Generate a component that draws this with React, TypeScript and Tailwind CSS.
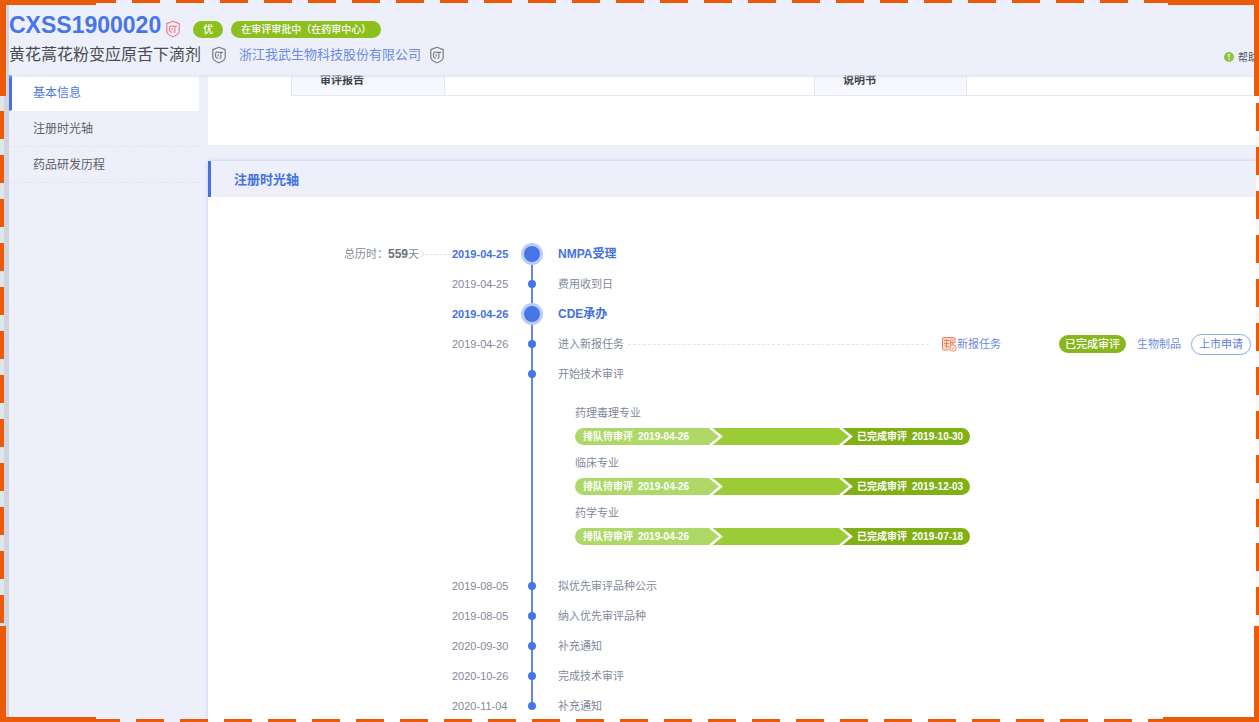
import clsx from "clsx";

const menu = ["基本信息", "注册时光轴", "药品研发历程"];

const reviews = [
  { name: "药理毒理专业", start: "2019-04-26", end: "2019-10-30" },
  { name: "临床专业", start: "2019-04-26", end: "2019-12-03" },
  { name: "药学专业", start: "2019-04-26", end: "2019-07-18" },
];

type Step = {
  date?: string;
  title: string;
  major?: boolean;
  total?: string;
  task?: boolean;
  reviews?: boolean;
};

const steps: Step[] = [
  { date: "2019-04-25", title: "NMPA受理", major: true, total: "559" },
  { date: "2019-04-25", title: "费用收到日" },
  { date: "2019-04-26", title: "CDE承办", major: true },
  { date: "2019-04-26", title: "进入新报任务", task: true },
  { title: "开始技术审评", reviews: true },
  { date: "2019-08-05", title: "拟优先审评品种公示" },
  { date: "2019-08-05", title: "纳入优先审评品种" },
  { date: "2020-09-30", title: "补充通知" },
  { date: "2020-10-26", title: "完成技术审评" },
  { date: "2020-11-04", title: "补充通知" },
];

function ShieldIcon({ className }: { className?: string }) {
  return (
    <svg
      viewBox="0 0 16 18"
      fill="none"
      stroke="currentColor"
      className={clsx("h-[18px] w-4 shrink-0", className)}
    >
      <path
        d="M8 1.2 14.2 3.6V11.4C14.2 13.8 11.4 15.4 8 16.8 4.6 15.4 1.8 13.8 1.8 11.4V3.6Z"
        strokeWidth="1.2"
        strokeLinejoin="round"
      />
      <path d="M6.4 5.6C4.8 6 4.4 7.2 4.4 8.8 4.4 10.8 5.2 12.2 7 12.3" strokeWidth="1.1" />
      <path d="M6.6 6.4H12M9.9 6.4V11.2Q9.9 12.3 8.4 12.2M7.2 8.2V10.4" strokeWidth="1.1" />
    </svg>
  );
}

function NewTaskIcon() {
  return (
    <svg
      viewBox="0 0 16 16"
      fill="none"
      stroke="currentColor"
      className="size-4 shrink-0 text-[#f4805c]"
    >
      <path d="M14 7V3Q14 1.5 12.5 1.5H3Q1.5 1.5 1.5 3V12.5Q1.5 14 3 14H8" fill="#fbd9cd" />
      <path d="M3 4.5H8M3 7.5H8M5.5 3V12M3.5 9.5 7.5 11M9.5 4H12.5M9.5 4V9M9.5 6.5H13M11.5 6.5V8" />
      <circle cx="12" cy="12" r="3.2" fill="#fff" />
      <path d="M10.5 12 11.8 13.2 13.6 10.8" />
    </svg>
  );
}

function Chevron({ left, right }: { left: string; right: string }) {
  return (
    <svg viewBox="0 0 14 17" className={clsx("h-[17px] w-[14px] shrink-0", right)}>
      <path d="M0 0H1L12 8.5 1 17H0Z" className={left} />
      <path d="M1 -0.5 12 8.5 1 17.5" fill="none" stroke="#fff" strokeWidth="2.4" />
    </svg>
  );
}

function ReviewBar({ start, end }: { start: string; end: string }) {
  return (
    <div className="flex h-[17px] w-[395px] items-center overflow-hidden rounded-full text-[10px] leading-[17px] font-bold text-white">
      <div className="flex w-[134px] gap-[5px] bg-[#aed868] pl-2">
        <span>排队待审评</span>
        <span>{start}</span>
      </div>
      <Chevron left="fill-[#aed868]" right="bg-[#9bcb35]" />
      <div className="h-full flex-1 bg-[#9bcb35]" />
      <Chevron left="fill-[#9bcb35]" right="bg-[#80b014]" />
      <div className="flex w-[117px] gap-[5px] bg-[#80b014] pl-1">
        <span>已完成审评</span>
        <span>{end}</span>
      </div>
    </div>
  );
}

function TimelineRow({ step, first, last }: { step: Step; first: boolean; last: boolean }) {
  return (
    <li className="grid grid-cols-[108px_56px_48px_1fr] text-[11px] leading-[30px] whitespace-nowrap text-[#82899a]">
      <div className="flex h-[30px] items-center">
        {step.total && (
          <>
            <span>总历时：</span>
            <strong className="text-xs text-[#6b7182]">{step.total}</strong>
            <span>天</span>
            <svg viewBox="0 0 6 10" className="h-[10px] w-[6px]" fill="none" stroke="#d9dde8">
              <path d="M1 1 5 5 1 9" />
            </svg>
            <span className="flex-1 border-t border-dashed border-[#dfe2ea]" />
          </>
        )}
      </div>
      <time className={clsx(step.major && "font-bold text-[#4472e0]")}>{step.date}</time>
      <div className="grid grid-rows-[30px_1fr] justify-items-center">
        <span
          className={clsx(
            "col-start-1 row-span-2 row-start-1 w-[2px] bg-[#6287ea]",
            first && "mt-[15px]",
            last && "mb-[15px]"
          )}
        />
        <span
          className={clsx(
            "col-start-1 row-start-1 self-center rounded-full bg-[#4676e6]",
            step.major ? "size-4 ring-[3px] ring-[#bccdf6]" : "size-2"
          )}
        />
      </div>
      <div className="pl-[2px]">
        <div className="flex h-[30px] items-center">
          <span className={clsx(step.major && "text-xs font-bold text-[#4472e0]")}>
            {step.title}
          </span>
          {step.task && (
            <>
              <span className="mr-3 ml-1 flex-1 border-t border-dashed border-[#e3e6ee]" />
              <NewTaskIcon />
              <a href="#task" className="mr-[58px] text-[#6d8be0]">
                新报任务
              </a>
              <span className="rounded-full bg-[#86b81b] px-[6px] leading-[18px] font-medium text-white">
                已完成审评
              </span>
              <a href="#biologics" className="ml-[11px] text-[#6d8be0]">
                生物制品
              </a>
              <button className="mr-2 ml-[10px] rounded-full border border-[#8ca7ee] px-[7px] leading-[19px] text-[#5f80dd]">
                上市申请
              </button>
            </>
          )}
        </div>
        {step.reviews && (
          <div className="flex flex-col gap-2 pt-[14px] pb-[26px] pl-[17px]">
            {reviews.map((r) => (
              <div key={r.name}>
                <p className="mb-[5px] leading-5">{r.name}</p>
                <ReviewBar start={r.start} end={r.end} />
              </div>
            ))}
          </div>
        )}
      </div>
    </li>
  );
}

// Orange dashed frame with solid corners, drawn over the page
function Frame() {
  return (
    <div className="pointer-events-none absolute inset-0 z-20" aria-hidden="true">
      <div className="absolute inset-x-0 top-0 h-[3px] bg-[repeating-linear-gradient(to_right,#ea5a08_0_28px,transparent_28px_44px)]" />
      <div className="absolute right-0 bottom-0 left-1 h-[3px] bg-[repeating-linear-gradient(to_right,#ea5a08_0_28px,transparent_28px_44px)]" />
      <div className="absolute top-[23px] bottom-0 left-0 w-1 bg-[repeating-linear-gradient(to_bottom,#ea5a08_0_28px,#dfe5e8_28px_44px)]" />
      <div className="absolute top-[15px] right-0 bottom-0 w-[3px] bg-[repeating-linear-gradient(to_bottom,#ea5a08_0_28px,#fff8f2_28px_44px)]" />
      <div className="absolute top-0 left-0 size-24 border-t-[5px] border-l-[6px] border-[#ea5a08]" />
      <div className="absolute top-0 right-0 h-24 w-[91px] border-t-[5px] border-r-[5px] border-[#ea5a08]" />
      <div className="absolute bottom-0 left-0 size-24 border-b-[5px] border-l-[6px] border-[#ea5a08]" />
      <div className="absolute right-0 bottom-0 size-24 border-r-[5px] border-b-[5px] border-[#ea5a08]" />
    </div>
  );
}

export default function App() {
  return (
    <div className="relative flex min-h-screen overflow-hidden bg-[#cfd4de] pl-[9px] font-['Liberation_Sans','Noto_Sans_CJK_SC',sans-serif]">
      <div className="flex min-w-0 flex-1 flex-col bg-[#edf0fa]">
        {/* Header */}
        <header className="relative z-10 bg-[#edf0fa] pt-[10px] pb-[5px] shadow-[0_1px_3px_#cfdcf2]">
          <div className="flex h-[30px] items-center">
            <h1 className="mr-1 text-[23px] leading-[30px] font-bold text-[#4876e8]">
              CXSS1900020
            </h1>
            <ShieldIcon className="mt-2 text-[#ec7f84]" />
            <span className="mt-2 ml-3 rounded-full bg-[#8cc01e] px-[10px] text-[10px] leading-[17px] font-medium text-white">
              优
            </span>
            <span className="mt-2 ml-2 rounded-full bg-[#8cc01e] px-[10px] text-[10px] leading-[17px] font-medium text-white">
              在审评审批中（在药审中心）
            </span>
          </div>
          <div className="flex h-[30px] items-center whitespace-nowrap">
            <h2 className="mr-[10px] text-base leading-[30px] text-[#4a4c52]">
              黄花蒿花粉变应原舌下滴剂
            </h2>
            <ShieldIcon className="text-[#777b82]" />
            <a href="#company" className="mr-2 ml-3 text-[13px] text-[#6b8ae4]">
              浙江我武生物科技股份有限公司
            </a>
            <ShieldIcon className="text-[#777b82]" />
            <button className="mt-1 mr-px ml-auto flex items-center gap-1 text-[10px] text-[#4f535c]">
              <svg viewBox="0 0 10 10" className="size-[10px]">
                <circle cx="5" cy="5" r="5" fill="#8cc63f" />
                <path d="M5 2V5.6M5 6.8V8" stroke="#fff" strokeWidth="1.2" />
              </svg>
              帮助
            </button>
          </div>
        </header>

        <div className="flex flex-1">
          {/* Side menu */}
          <nav className="mr-[9px] w-[190px] shrink-0">
            {menu.map((item, i) => (
              <a
                key={item}
                href={`#section-${i}`}
                className={clsx(
                  "block h-9 border-b border-l-[3px] pl-[21px] text-xs leading-[37px]",
                  i === 0
                    ? "border-b-white border-l-[#4472e6] bg-white text-[#4f78e6]"
                    : "border-b-[#e0e4ef] border-l-transparent [border-bottom-style:dashed] text-[#5c5f66]"
                )}
              >
                {item}
              </a>
            ))}
          </nav>

          {/* Content */}
          <main className="flex min-w-0 flex-1 flex-col gap-4">
            <section className="h-[70px] overflow-hidden bg-white pl-[83px]">
              <table className="-mt-[10px] w-full table-fixed border-collapse text-[11px] text-[#3d4048]">
                <tbody>
                  <tr className="h-[30px] border-b border-[#e4e8f4]">
                    <th className="w-[153px] border-x border-[#e4e8f4] bg-[#f6f8fd] pl-7 text-left">
                      审评报告
                    </th>
                    <td className="w-[370px]" />
                    <th className="w-[152px] border-x border-[#e4e8f4] bg-[#f6f8fd] pl-7 text-left">
                      说明书
                    </th>
                    <td />
                  </tr>
                </tbody>
              </table>
            </section>

            <section className="flex-1 bg-white shadow-[0_0_4px_#c3cef2]">
              <h3 className="h-9 border-l-[3px] border-[#4472e6] bg-[#edf0fa] pl-[23px] text-[13px] leading-[37px] font-bold text-[#4472e0]">
                注册时光轴
              </h3>
              <ol className="pt-[42px] pl-[136px]">
                {steps.map((step, i) => (
                  <TimelineRow
                    key={i}
                    step={step}
                    first={i === 0}
                    last={i === steps.length - 1}
                  />
                ))}
              </ol>
            </section>
          </main>
        </div>
      </div>
      <Frame />
    </div>
  );
}
